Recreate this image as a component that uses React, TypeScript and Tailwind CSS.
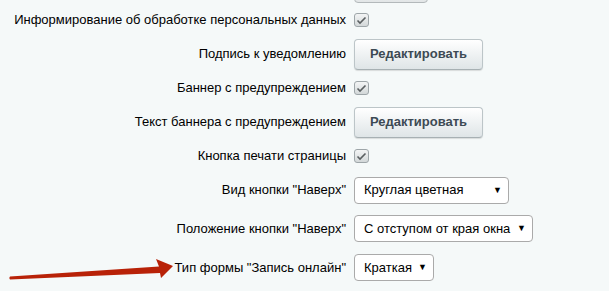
import React from 'react';

const Checkbox = () => (
  <div className="w-[15px] h-[14px] rounded-[3px] border border-[#9ea6a9] bg-gradient-to-b from-[#f3f5f5] to-[#d3d8d9] flex items-center justify-center">
    <svg width="11" height="9" viewBox="0 0 11 9" fill="none">
      <path d="M1.5 4.5 L4 7 L9.5 1.5" stroke="#5a5f61" strokeWidth="1.6" />
    </svg>
  </div>
);

const EditButton = () => (
  <button className="h-[31px] w-[129px] rounded-[4px] border border-[#bcc5c8] border-b-[#a7b0b3] bg-gradient-to-b from-[#ffffff] to-[#dfe5e7] shadow-[0_1px_1px_rgba(0,0,0,0.12)] text-[13px] font-bold text-[#3d4a54]">
    Редактировать
  </button>
);

const Select = ({ value, width }: { value: string; width: string }) => (
  <div className={`${width} h-[27px] rounded-[4px] border border-[#aaaaaa] bg-white flex items-center justify-between pl-[9px] pr-[6px] text-[13px] text-black`}>
    <span>{value}</span>
    <span className="text-[9px] leading-none">▼</span>
  </div>
);

type Row = { label: string; control: React.ReactNode; h: string };

const rows: Row[] = [
  { label: 'Информирование об обработке персональных данных', control: <Checkbox />, h: 'h-[34px]' },
  { label: 'Подпись к уведомлению', control: <EditButton />, h: 'h-[34px]' },
  { label: 'Баннер с предупреждением', control: <Checkbox />, h: 'h-[34px]' },
  { label: 'Текст баннера с предупреждением', control: <EditButton />, h: 'h-[34px]' },
  { label: 'Кнопка печати страницы', control: <Checkbox />, h: 'h-[34px]' },
  { label: 'Вид кнопки "Наверх"', control: <Select value="Круглая цветная" width="w-[155px]" />, h: 'h-[34px]' },
  { label: 'Положение кнопки "Наверх"', control: <Select value="С отступом от края окна" width="w-[179px]" />, h: 'h-[43px]' },
  { label: 'Тип формы "Запись онлайн"', control: <Select value="Краткая" width="w-[80px]" />, h: 'h-[35px]' },
];

export default function App() {
  return (
    <div className="relative w-[609px] h-[291px] overflow-hidden bg-[#f5f9f9] text-black" style={{ fontFamily: '"Liberation Sans", Arial, sans-serif' }}>
      <div className="flex flex-col">
        {/* cut-off control from the row above */}
        <div className="flex h-[3px] items-end">
          <div className="w-[354px]" />
          <div className="w-[74px] h-[26px] shrink-0 rounded-[4px] border border-[#b3b9bb] bg-gradient-to-b from-white to-[#e2e6e7]" />
        </div>
        {rows.map((r) => (
          <div key={r.label} className={`flex items-center ${r.h}`}>
            <div className="w-[347px] pr-[1px] text-right text-[13px] whitespace-nowrap">{r.label}</div>
            <div className="ml-[7px] flex items-center">{r.control}</div>
          </div>
        ))}
      </div>

      {/* red annotation arrow */}
      <svg className="absolute left-0 top-0 pointer-events-none" width="609" height="291" viewBox="0 0 609 291">
        <path
          d="M10 276.6 L159 266.5 L156 259 L173 266 L161 278 L160 273 L10 279.6 Q8.5 278.1 10 276.6 Z"
          fill="#b82208"
        />
      </svg>
    </div>
  );
}
